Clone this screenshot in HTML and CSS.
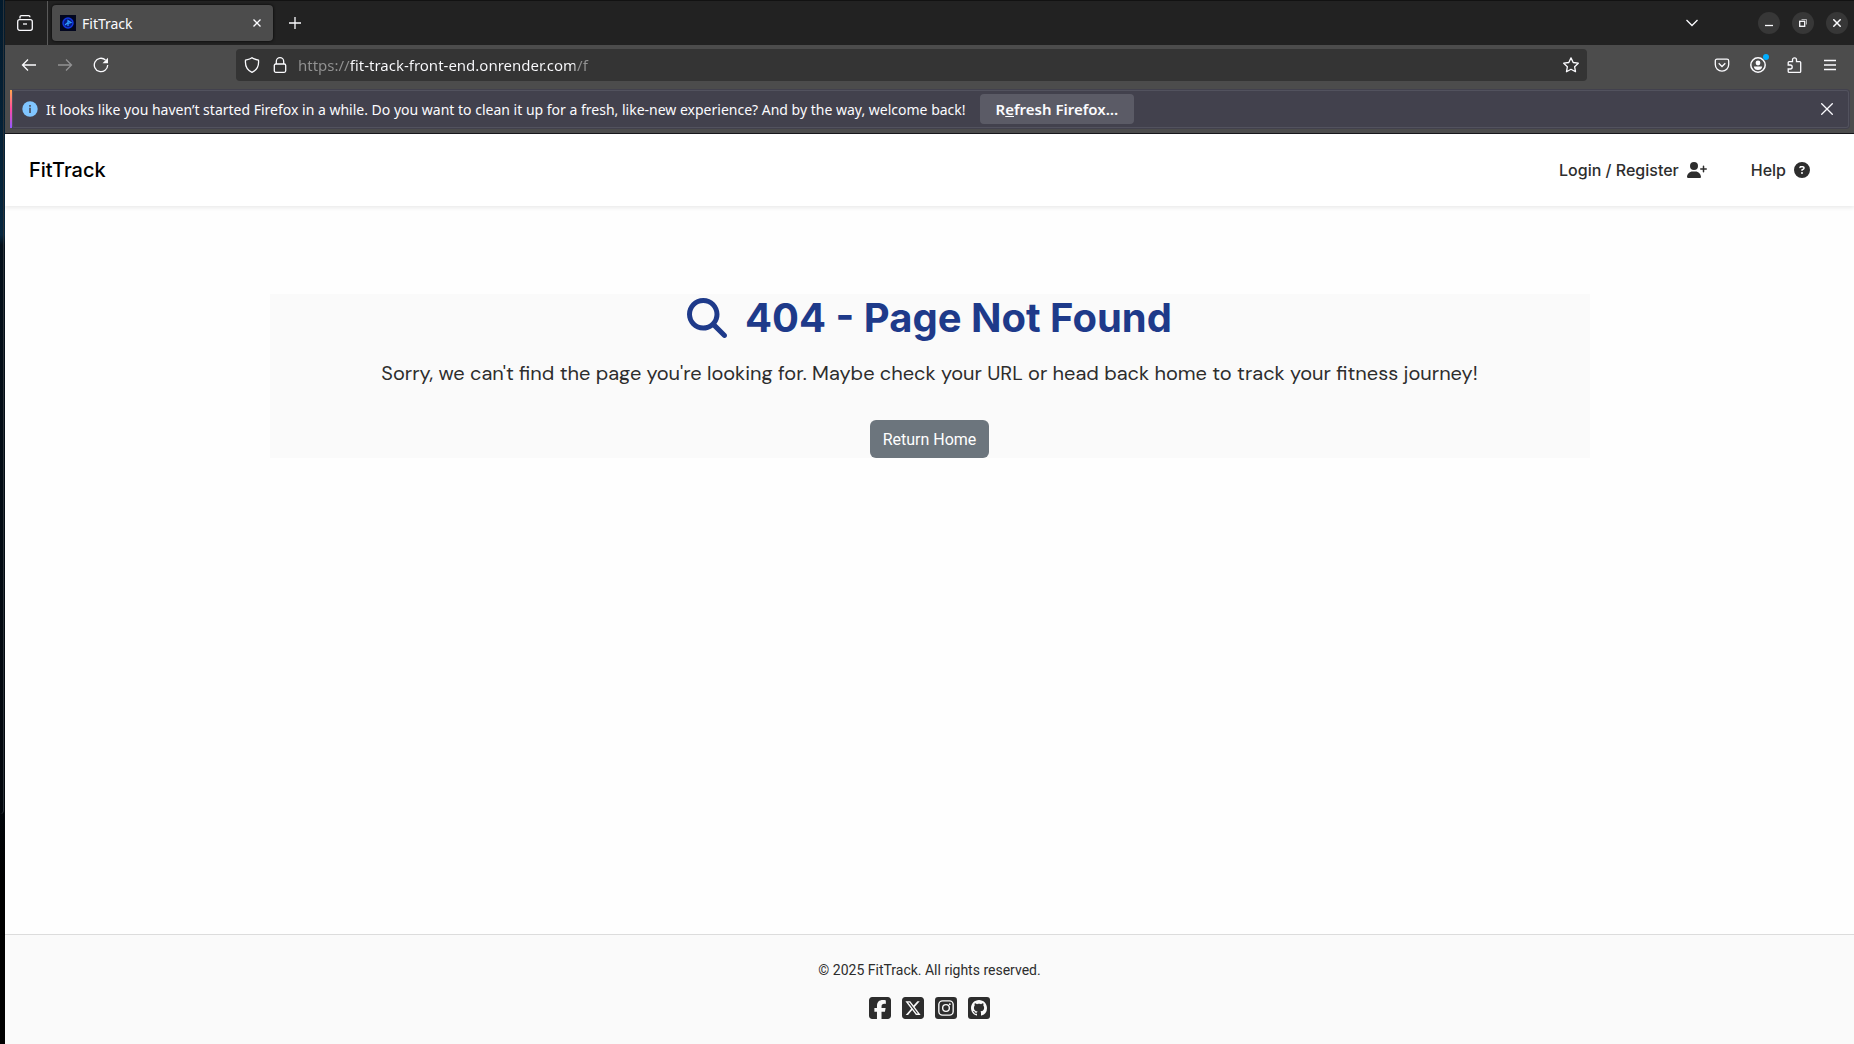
FILE: index.html
```html
<!DOCTYPE html>
<html lang="en">
<head>
<meta charset="utf-8">
<meta name="viewport" content="width=device-width, initial-scale=1">
<title>FitTrack</title>
<link rel="stylesheet" href="styles.css">
</head>
<body>
<div class="desktop-edge"><div class="edge-window"></div></div>
<div class="window">
  <div class="tab-strip">
    <button class="icon-btn recent" aria-label="Recent browsing">
      <svg width="16" height="16" viewBox="0 0 16 16" class="line"><path d="M3 3.500V2.200Q3 .7 4.500 .7h7Q13 .7 13 2.200"/><rect x=".7" y="4.700" width="14.600" height="10.600" rx="2"/><path d="M6 9h4"/></svg>
    </button>
    <div class="tab">
      <svg width="16" height="16" viewBox="0 0 16 16"><rect width="16" height="16" fill="#02061f"/><circle cx="8" cy="8" r="5" fill="#061a80" stroke="#1238e0" stroke-width="1.500"/><path d="M5 10l3-2.500V5.500L11 7.500 8 8.500V11" fill="none" stroke="#2f9bff" stroke-width="1.200"/></svg>
      <span class="tab-title">FitTrack</span>
      <button class="icon-btn tab-close" aria-label="Close tab">
        <svg width="8" height="8" viewBox="0 0 8 8" class="line"><path d="M.5.5l7 7M7.500.5l-7 7"/></svg>
      </button>
    </div>
    <button class="icon-btn new-tab" aria-label="New tab">
      <svg width="12" height="12" viewBox="0 0 12 12" class="line"><path d="M6 0v12M0 6h12"/></svg>
    </button>
    <button class="icon-btn list-tabs" aria-label="List all tabs">
      <svg width="12" height="8" viewBox="0 0 12 8" class="line"><path d="M.5 1L6 6.500 11.500 1"/></svg>
    </button>
    <div class="window-controls">
      <button class="round-btn" aria-label="Minimize"><svg width="8" height="8" viewBox="0 0 8 8" class="line"><path d="M0 6.500h8"/></svg></button>
      <button class="round-btn" aria-label="Restore"><svg width="8" height="8" viewBox="0 0 8 8" class="line"><path d="M2.500.5h5v5" stroke-width="1" opacity=".6"/><rect x=".7" y="2.300" width="5" height="5"/></svg></button>
      <button class="round-btn" aria-label="Close window"><svg width="8" height="8" viewBox="0 0 8 8" class="line"><path d="M.3.3l7.400 7.400M7.700.3L.3 7.700" stroke-width="1.500"/></svg></button>
    </div>
  </div>
  <div class="toolbar">
    <div class="nav-buttons">
      <button class="icon-btn" aria-label="Back"><svg width="16" height="16" viewBox="0 0 16 16" class="line"><path d="M15 8H1.500M7 2.500L1.500 8 7 13.500"/></svg></button>
      <button class="icon-btn" aria-label="Forward" disabled><svg width="16" height="16" viewBox="0 0 16 16" class="line"><path d="M1 8h13.500M9 2.500L14.500 8 9 13.500"/></svg></button>
      <button class="icon-btn" aria-label="Reload"><svg width="16" height="16" viewBox="0 0 16 16" class="line"><path d="M14.700 8A6.700 6.700 0 1 1 12.500 3"/><path d="M15 .8v5.500H9.500z" fill="#fbfbfe" stroke="none"/></svg></button>
    </div>
    <div class="url-bar">
      <svg width="16" height="16" viewBox="0 0 16 16" class="line"><path d="M8 .7C6.500 2 4 2.600 1.500 3.200 1 8.500 3 13 8 15.300 13 13 15 8.500 14.500 3.200 12 2.600 9.500 2 8 .7z"/></svg>
      <svg width="16" height="16" viewBox="0 0 16 16" class="line"><rect x="2.300" y="7" width="11.400" height="8.300" rx="1.500"/><path d="M4.300 7V4.400a3.700 3.700 0 0 1 7.400 0V7"/></svg>
      <input class="url" type="text" aria-label="Address" value="https://fit-track-front-end.onrender.com/f" spellcheck="false">
      <button class="icon-btn" aria-label="Bookmark this page"><svg width="16" height="16" viewBox="0 0 16 16" class="line"><path d="M8 .9l2.200 4.600 5.100.7-3.700 3.500.9 5L8 12.300l-4.500 2.400.9-5L.7 6.200l5.100-.7z" stroke-linejoin="round"/></svg></button>
    </div>
    <div class="toolbar-actions">
      <button class="icon-btn" aria-label="Save to Pocket"><svg width="16" height="16" viewBox="0 0 16 16" class="line"><path d="M3 2.200h10q1.700 0 1.700 1.700V7.500a6.700 6.700 0 0 1-13.400 0V3.900Q1.300 2.200 3 2.200z"/><path d="M4.700 6.300L8 9.500l3.300-3.200"/></svg></button>
      <button class="icon-btn account" aria-label="Account"><svg width="16" height="16" viewBox="0 0 16 16" class="line"><circle cx="8" cy="8" r="7.200" stroke-width="1.500"/><circle cx="8" cy="6" r="2.400" fill="#fbfbfe" stroke="none"/><path d="M3.800 9.500h8.400q-.5 3.500-4.200 3.500t-4.200-3.500z" fill="#fbfbfe" stroke="none"/></svg><span class="dot"></span></button>
      <button class="icon-btn" aria-label="Extensions"><svg width="16" height="16" viewBox="0 0 16 16" class="line"><path d="M2.200 8V5.500Q2.200 4.600 3.200 4.600h3.300V2.800a2 2 0 0 1 4 0v1.800h3.300q.9 0 .9.900v8.900q0 .9-.9.900H3.200q-1 0-1-.9v-2.400h2a2 2 0 0 0 0-4z"/></svg></button>
      <button class="icon-btn" aria-label="Application menu"><svg width="16" height="16" viewBox="0 0 16 16" class="line"><path d="M2 3.500h12M2 8h12M2 12.500h12"/></svg></button>
    </div>
  </div>
  <div class="notice">
    <svg width="16" height="16" viewBox="0 0 16 16"><circle cx="8" cy="8" r="7.700" fill="#80c5ff"/><path d="M8 4v1.700M8 6.700V12" stroke="#42414d" stroke-width="1.500"/></svg>
    <span class="notice-text">It looks like you haven’t started Firefox in a while. Do you want to clean it up for a fresh, like-new experience? And by the way, welcome back!</span>
    <button class="notice-btn">R<span class="access-key">e</span>fresh Firefox…</button>
    <button class="icon-btn notice-close" aria-label="Dismiss"><svg width="12" height="12" viewBox="0 0 12 12" class="line"><path d="M.3.3l11.400 11.400M11.700.3L.3 11.700"/></svg></button>
  </div>
  <div class="page">
    <header class="navbar">
      <a class="brand" href="#">FitTrack</a>
      <nav class="nav-links">
        <a href="#">Login / Register
          <svg width="20" height="16" viewBox="0 0 640 512"><path d="M96 128a128 128 0 1 1 256 0A128 128 0 1 1 96 128zM0 482.300C0 383.800 79.800 304 178.300 304h91.400C368.200 304 448 383.800 448 482.300c0 16.400-13.300 29.700-29.700 29.700H29.700C13.300 512 0 498.700 0 482.300zM504 312V248H440c-13.300 0-24-10.700-24-24s10.700-24 24-24h64V136c0-13.300 10.700-24 24-24s24 10.700 24 24v64h64c13.300 0 24 10.700 24 24s-10.700 24-24 24H552v64c0 13.300-10.700 24-24 24s-24-10.700-24-24z"/></svg></a>
        <a href="#">Help
          <svg width="16" height="16" viewBox="0 0 512 512"><path d="M256 512A256 256 0 1 0 256 0a256 256 0 1 0 0 512zM169.800 165.300c7.900-22.300 29.100-37.300 52.800-37.300h58.300c34.900 0 63.100 28.300 63.100 63.100c0 22.600-12.100 43.500-31.700 54.800L280 264.400c-.2 13-10.900 23.600-24 23.600c-13.300 0-24-10.700-24-24V250.500c0-8.600 4.600-16.500 12.100-20.800l44.300-25.400c4.700-2.700 7.600-7.700 7.600-13.100c0-8.400-6.800-15.100-15.100-15.100H222.600c-3.400 0-6.400 2.100-7.500 5.300l-.4 1.200c-4.400 12.500-18.200 19-30.600 14.600s-19-18.200-14.600-30.600l.4-1.200zM224 352a32 32 0 1 1 64 0 32 32 0 1 1 -64 0z"/></svg></a>
      </nav>
    </header>
    <main class="content">
      <section class="not-found">
        <h1><svg width="40" height="40" viewBox="0 0 512 512"><path d="M416 208c0 45.900-14.900 88.300-40 122.700L502.600 457.400c12.500 12.500 12.500 32.800 0 45.300s-32.800 12.500-45.300 0L330.700 376c-34.400 25.200-76.800 40-122.700 40C93.100 416 0 322.900 0 208S93.100 0 208 0S416 93.100 416 208zM208 352a144 144 0 1 0 0-288 144 144 0 1 0 0 288z"/></svg>404 - Page Not Found</h1>
        <p>Sorry, we can't find the page you're looking for. Maybe check your URL or head back home to track your fitness journey!</p>
        <button class="home-btn">Return Home</button>
      </section>
    </main>
    <footer class="footer">
      <p>© 2025 FitTrack. All rights reserved.</p>
      <div class="social">
        <a href="#" aria-label="Facebook"><svg width="22" height="22" viewBox="0 32 448 448"><path d="M64 32C28.700 32 0 60.700 0 96V416c0 35.300 28.700 64 64 64h98.200V334.200H109.400V256h52.800V222.300c0-87.100 39.400-127.500 125-127.500c16.200 0 44.200 3.200 55.700 6.400V172c-6-.6-16.500-1-29.600-1c-42 0-58.200 15.900-58.200 57.200V256h83.600l-14.400 78.200H255V480H384c35.300 0 64-28.700 64-64V96c0-35.300-28.700-64-64-64H64z"/></svg></a>
        <a href="#" aria-label="X"><svg width="22" height="22" viewBox="0 32 448 448"><path d="M64 32C28.700 32 0 60.700 0 96V416c0 35.300 28.700 64 64 64H384c35.300 0 64-28.700 64-64V96c0-35.300-28.700-64-64-64H64zm297.100 84L257.300 234.600 379.400 396H283.800L209 298.100 123.300 396H75.800l111-126.900L69.700 116h98l67.700 89.500L313.600 116h47.500zM323.300 367.600L153.400 142.900H125.100L296.900 367.600h26.300z"/></svg></a>
        <a href="#" aria-label="Instagram"><svg width="22" height="22" viewBox="0 0 448 448"><rect width="448" height="448" rx="64"/><g fill="none" stroke="#fafafa" stroke-width="28"><rect x="78" y="78" width="292" height="292" rx="76"/><circle cx="224" cy="224" r="68"/></g><circle cx="302" cy="146" r="19" fill="#fafafa"/></svg></a>
        <a href="#" aria-label="GitHub"><svg width="22" height="22" viewBox="0 0 22 22"><rect width="22" height="22" rx="3"/><path fill="#fafafa" transform="translate(3 3)" d="M8 0C3.580 0 0 3.580 0 8c0 3.540 2.290 6.530 5.470 7.590.4.070.55-.17.55-.38 0-.19-.01-.82-.01-1.490-2.010.37-2.530-.49-2.690-.94-.09-.23-.48-.94-.82-1.130-.28-.15-.68-.52-.01-.53.63-.01 1.080.58 1.230.82.72 1.210 1.870.87 2.330.66.070-.52.280-.87.510-1.070-1.780-.2-3.640-.89-3.640-3.950 0-.87.310-1.590.820-2.150-.08-.2-.36-1.020.080-2.120 0 0 .67-.21 2.200.82.64-.18 1.320-.27 2-.27s1.360.09 2 .27c1.530-1.040 2.200-.82 2.200-.82.440 1.100.160 1.920.080 2.120.510.560.820 1.270.820 2.150 0 3.070-1.870 3.750-3.650 3.950.290.250.540.730.540 1.480 0 1.070-.01 1.930-.01 2.200 0 .210.150.460.550.380A8.010 8.010 0 0 0 16 8c0-4.420-3.580-8-8-8z"/></svg></a>
      </div>
    </footer>
  </div>
</div>
</body>
</html>
```
FILE: styles.css
```css
* { box-sizing: border-box; }

body {
  margin: 0;
  min-height: 100vh;
  display: flex;
  background: #000;
  font-family: "Noto Sans", sans-serif;
}

button, input { font: inherit; border: 0; padding: 0; background: none; color: inherit; }
a { color: inherit; text-decoration: none; }
svg { display: block; flex: none; }
h1, p { margin: 0; }

.line { fill: none; stroke: #fbfbfe; stroke-width: 1.3; }

/* sliver of desktop behind the browser window */
.desktop-edge {
  width: 5px;
  flex: none;
  background: linear-gradient(#031a2c, #06273f 235px, #04101b 245px, #02070d 800px, #000 880px);
}
.edge-window {
  height: 78vh;
  width: 4px;
  border-right: 1px solid #2b3238;
  border-bottom-right-radius: 4px;
}

.window {
  flex: 1;
  min-width: 0;
  display: flex;
  flex-direction: column;
  background: #4c4c4c;
  color: #fbfbfe;
  font-size: 14px;
}

.icon-btn {
  width: 36px;
  height: 32px;
  display: flex;
  align-items: center;
  justify-content: center;
}
.icon-btn:disabled { opacity: .4; }

.tab-strip {
  height: 45px;
  display: flex;
  align-items: center;
  background: #222;
  border-top: 1px solid #121212;
}
.recent {
  width: 43px;
  height: 44px;
  padding-right: 2px;
  border-right: 1px solid #5a5a5a;
}
.tab {
  width: 221px;
  height: 36px;
  margin: 0 8px 0 4px;
  padding-left: 8px;
  display: flex;
  align-items: center;
  gap: 6px;
  border-radius: 4px;
  background: #4c4c4c;
  box-shadow: 0 0 3px #000;
}
.tab-title { flex: 1; }
.tab-close { width: 32px; }
.new-tab { width: 28px; }
.list-tabs { margin-left: auto; }
.window-controls { display: flex; gap: 12px; margin: 0 6px 0 48px; }
.round-btn {
  width: 22px;
  height: 22px;
  display: flex;
  align-items: center;
  justify-content: center;
  border-radius: 50%;
  background: #373737;
}

.toolbar {
  height: 40px;
  display: flex;
  align-items: center;
  padding: 0 6px;
}
.nav-buttons, .toolbar-actions { display: flex; }
.url-bar {
  flex: 1;
  height: 32px;
  margin: 0 117px;
  padding-left: 8px;
  display: flex;
  align-items: center;
  gap: 12px;
  border-radius: 4px;
  background: #343434;
}
.url-bar .icon-btn { width: 32px; }
.url {
  flex: 1;
  min-width: 0;
  margin-left: -2px;
  height: 32px;
  outline: 0;
  font-size: 15px;
  color: transparent;
  background: linear-gradient(90deg, #929292 52px, #fbfbfe 52px, #fbfbfe 277px, #929292 277px);
  -webkit-background-clip: text;
  background-clip: text;
}
.account { position: relative; }
.dot {
  position: absolute;
  top: 5px;
  right: 7px;
  width: 6px;
  height: 6px;
  border-radius: 50%;
  background: #00aeff;
}

.notice {
  min-height: 40px;
  margin: 4px 4px 4px 5px;
  padding-left: 10px;
  display: flex;
  align-items: center;
  gap: 8px;
  border: 1px solid #52525e;
  border-left: 2px solid;
  border-image: linear-gradient(#ffa84c, #ff4aa2 50%, #9059ff) 0 0 0 2;
  border-radius: 4px;
  background: #42414d;
  box-shadow: inset 0 0 0 1px #52525e;
}
.notice-btn {
  height: 30px;
  margin-left: 6px;
  padding: 0 16px;
  border-radius: 4px;
  background: #5b5b66;
  font-size: 15px;
  font-weight: 600;
  white-space: nowrap;
}
.access-key { text-decoration: underline; }
.notice-close { margin-left: auto; width: 44px; }

.page {
  flex: 1;
  display: flex;
  flex-direction: column;
  border-top: 1px solid #18181c;
  background: #fefefe;
  color: #2d2d2d;
  fill: #2d2d2d;
  font-family: Inter, sans-serif;
  font-size: 16px;
}
.navbar {
  min-height: 72px;
  padding: 0 44px 0 24px;
  display: flex;
  align-items: center;
  justify-content: space-between;
  background: #fff;
  box-shadow: 0 2px 4px rgba(0, 0, 0, .08);
  font-weight: 500;
}
.brand { font-size: 20px; color: #000; }
.nav-links, .nav-links a { display: flex; align-items: center; }
.nav-links { gap: 44px; }
.nav-links a { gap: 8px; }

.content { flex: 1; padding: 88px 24px; }
.not-found {
  max-width: 1320px;
  margin: 0 auto;
  display: flex;
  flex-direction: column;
  align-items: center;
  background: #fafafa;
  text-align: center;
}
.not-found h1 {
  display: flex;
  align-items: center;
  gap: 18px;
  color: #1e3a8a;
  fill: #1e3a8a;
  font-size: 40px;
  font-weight: 700;
  line-height: 48px;
}
.not-found p {
  margin: 16px 0 32px;
  font-family: "DM Sans", Inter, sans-serif;
  font-size: 20px;
  line-height: 30px;
}
.home-btn {
  height: 38px;
  padding: 0 13px;
  border-radius: 6px;
  background: #6c757d;
  color: #fff;
  font-family: Roboto, sans-serif;
}

.footer {
  padding: 24px;
  display: flex;
  flex-direction: column;
  align-items: center;
  gap: 16px;
  border-top: 1px solid #dcdcdc;
  background: #fafafa;
  font-family: Roboto, sans-serif;
  font-size: 14px;
  line-height: 22px;
}
.social { display: flex; gap: 11px; padding-bottom: 1px; }
```
